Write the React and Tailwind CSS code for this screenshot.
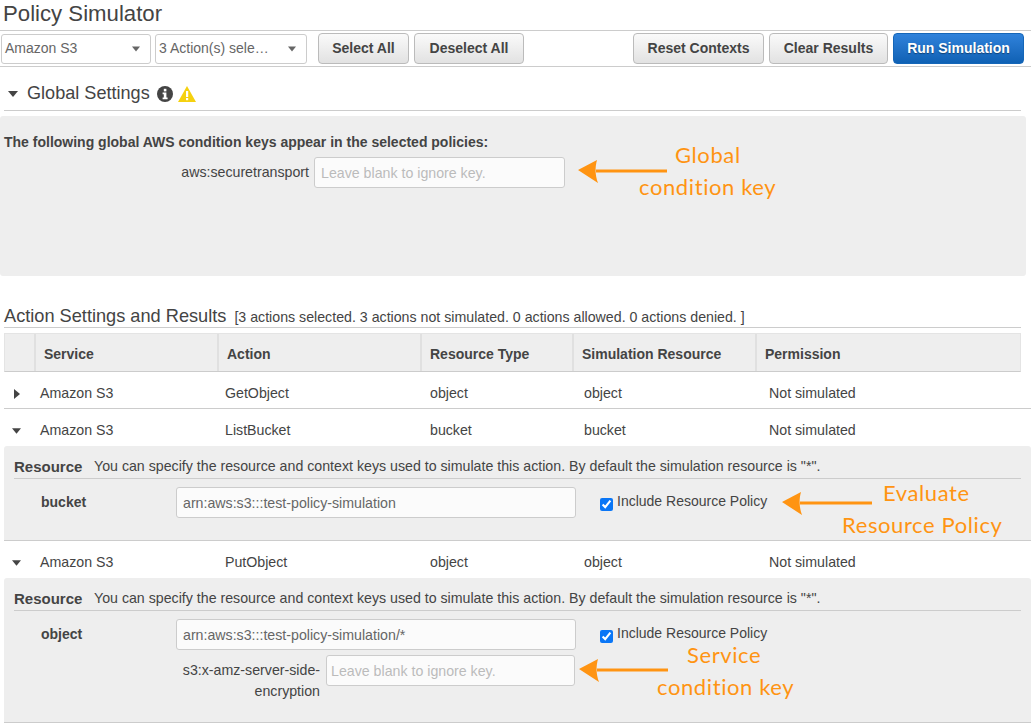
import React from "react";

const Caret = ({ className = "" }) => (
  <svg width="10" height="6" viewBox="0 0 10 6" className={className}>
    <path d="M0 0h10L5 6z" fill="currentColor" />
  </svg>
);

function Select({ label, width }) {
  return (
    <div className={`${width} h-[30px] bg-white border border-[#ccc] rounded-[3px] flex items-center justify-between pl-[3px] pr-[10px] text-[14px] text-[#666]`}>
      <span>{label}</span>
      <Caret className="text-[#666] w-[8px]" />
    </div>
  );
}

function Btn({ children, width }) {
  return (
    <button className={`${width} h-[31px] rounded-[4px] border border-[#bbb] bg-linear-to-b from-[#fafafa] to-[#e2e2e2] text-[14px] font-bold text-[#444]`}>
      {children}
    </button>
  );
}

// hand drawn arrow pointing left, used by the annotations
function Arrow({ width = 90 }) {
  return (
    <svg width={width} height="26" viewBox={`0 0 ${width} 26`}>
      <path d={`M18 13H${width}`} stroke="#ff9412" strokeWidth="3" />
      <path d="M0 12L19 2C17 9 17 17 20 25z" fill="#ff9412" />
    </svg>
  );
}

function Note({ className, lines }) {
  return (
    <div className={`absolute whitespace-nowrap text-[#ff9412] text-[22px] leading-[32px] tracking-[0.6px] font-['Lato','DejaVu_Sans',sans-serif] ${className}`}>
      {lines.map((l) => (
        <div key={l.text} className={l.cls}>{l.text}</div>
      ))}
    </div>
  );
}

function ActionRow({ action, type, open, border }) {
  return (
    <div className={`grid grid-cols-[36px_185px_205px_154px_185px_1fr] items-center ml-[4px] h-[37px] text-[14.2px] text-[#444] ${border ? "pt-[7px] border-b border-[#ccc]" : "pt-[6px]"}`}>
      <span className="flex justify-center pr-[11px]">
        {open ? (
          <Caret className="text-[#444] w-[9px]" />
        ) : (
          <svg width="6" height="10" viewBox="0 0 6 10"><path d="M0 0l6 5-6 5z" fill="#444" /></svg>
        )}
      </span>
      <span>Amazon S3</span>
      <span>{action}</span>
      <span>{type}</span>
      <span>{type}</span>
      <span>Not simulated</span>
    </div>
  );
}

function Field({ value, placeholder, width, pad = "px-[6px]" }) {
  return (
    <input
      readOnly
      value={value || ""}
      placeholder={placeholder}
      className={`${width} ${pad} h-[31px] rounded-[3px] border border-[#ccc] bg-[#fbfbfb] text-[14.2px] text-[#666] placeholder:text-[#bbb] outline-none`}
    />
  );
}

function ResourceHead() {
  return (
    <div className="ml-[10px] mr-[10px] h-[33px] pt-[10px] border-b border-[#ccc] flex items-center text-[#444]">
      <b className="text-[15px] w-[80px]">Resource</b>
      <span className="text-[14.2px] whitespace-nowrap">You can specify the resource and context keys used to simulate this action. By default the simulation resource is "*".</span>
    </div>
  );
}

function IncludePolicy() {
  return (
    <label className="flex items-start gap-[4px] ml-[24px] -mt-[2px] text-[14px] text-[#444]">
      <input type="checkbox" readOnly checked className="w-[13px] h-[13px] mt-[7px] accent-[#0a76f6]" />
      <span>Include Resource Policy</span>
    </label>
  );
}

export default function App() {
  const headers = ["Service", "Action", "Resource Type", "Simulation Resource", "Permission"];
  return (
    <div className="relative w-[1031px] h-[726px] overflow-hidden bg-white text-[#444] font-['Liberation_Sans',Arial,sans-serif]">
      <h1 className="h-[31px] pl-[3px] text-[22.2px] leading-[27px] border-b border-[#ccc]">Policy Simulator</h1>

      <div className="h-[36px] border-b border-[#ccc] flex items-center pl-[1px] pr-[7px]">
        <Select label="Amazon S3" width="w-[150px]" />
        <div className="ml-[4px]"><Select label="3 Action(s) sele…" width="w-[152px]" /></div>
        <div className="ml-[11px] flex gap-[5px]">
          <Btn width="w-[91px]">Select All</Btn>
          <Btn width="w-[110px]">Deselect All</Btn>
        </div>
        <div className="ml-auto flex gap-[5px]">
          <Btn width="w-[131px]">Reset Contexts</Btn>
          <Btn width="w-[119px]">Clear Results</Btn>
          <button className="w-[131px] h-[31px] rounded-[4px] border border-[#1566b8] bg-linear-to-b from-[#2f82db] to-[#0f61b4] text-[14px] font-bold text-white [text-shadow:0_1px_1px_#0006]">
            Run Simulation
          </button>
        </div>
      </div>

      <div className="ml-[4px] mr-[10px] h-[44px] pt-[10px] border-b border-[#ccc] flex items-center pl-[4px]">
        <Caret className="text-[#444] w-[10px]" />
        <span className="ml-[9px] text-[18.1px]">Global Settings</span>
        <svg width="16" height="16" viewBox="0 0 16 16" className="ml-[7px]">
          <circle cx="8" cy="8" r="8" fill="#444" />
          <rect x="6.8" y="2.8" width="2.6" height="2.6" fill="#fff" />
          <path d="M5.6 6.6h3.8v5h1.2v1.6H5.6v-1.6h1.2V8.2H5.6z" fill="#fff" />
        </svg>
        <svg width="18" height="16" viewBox="0 0 18 16" className="ml-[5px]">
          <path d="M9 0l9 16H0z" fill="#f5d10f" />
          <rect x="8" y="5" width="2.2" height="6" fill="#fff" />
          <rect x="8" y="12" width="2.2" height="2.2" fill="#fff" />
        </svg>
      </div>

      <section className="relative mt-[5px] mr-[5px] h-[160px] bg-[#eee] rounded-[3px]">
        <p className="pl-[4px] pt-[18px] text-[14px] leading-[17px] font-bold">The following global AWS condition keys appear in the selected policies:</p>
        <div className="mt-[6px] flex items-center">
          <span className="w-[309px] text-right text-[14.2px]">aws:securetransport</span>
          <div className="ml-[5px]"><Field placeholder="Leave blank to ignore key." width="w-[251px]" /></div>
        </div>
      </section>

      <div className="ml-[4px] mr-[10px] mt-[27px] h-[25px] pt-[1px] border-b border-[#ccc] flex items-baseline">
        <span className="text-[18.2px] leading-[24px]">Action Settings and Results</span>
        <span className="ml-[8px] text-[14.2px]">[3 actions selected. 3 actions not simulated. 0 actions allowed. 0 actions denied. ]</span>
      </div>

      <div className="ml-[4px] mr-[10px] mt-[5px] h-[39px] bg-[#eee] border border-[#e4e4e4] border-b-[#ccc] grid grid-cols-[29px_183px_203px_152px_183px_1fr] text-[14px] font-bold">
        <span />
        {headers.map((h) => (
          <span key={h} className="border-l-2 border-[#e0e0e0] pl-[8px] pt-[3px] flex items-center">{h}</span>
        ))}
      </div>

      <ActionRow action="GetObject" type="object" border />
      <ActionRow action="ListBucket" type="bucket" open />

      <section className="ml-[4px] h-[95px] bg-[#eee] rounded-t-[3px] border-b border-[#ccc]">
        <ResourceHead />
        <div className="mt-[8px] flex items-center">
          <b className="w-[172px] pl-[37px] text-[14px]">bucket</b>
          <Field value="arn:aws:s3:::test-policy-simulation" width="w-[400px]" />
          <IncludePolicy />
        </div>
      </section>

      <ActionRow action="PutObject" type="object" open />

      <section className="ml-[4px] h-[145px] bg-[#eee] rounded-t-[3px] border-b border-[#ccc]">
        <ResourceHead />
        <div className="mt-[8px] flex items-center">
          <b className="w-[172px] pl-[37px] text-[14px]">object</b>
          <Field value="arn:aws:s3:::test-policy-simulation/*" width="w-[400px]" />
          <IncludePolicy />
        </div>
        <div className="mt-[5px] flex items-start">
          <span className="w-[316px] pl-[160px] text-right text-[14.2px] leading-[21px] pt-[5px]">s3:x-amz-server-side-encryption</span>
          <div className="ml-[6px]"><Field placeholder="Leave blank to ignore key." width="w-[249px]" pad="px-[4px]" /></div>
        </div>
      </section>

      <div className="absolute left-[578px] top-[158px]"><Arrow width={89} /></div>
      <Note className="left-[639px] top-[139px]" lines={[{ text: "Global", cls: "pl-[36px]" }, { text: "condition key" }]} />

      <div className="absolute left-[782px] top-[490px]"><Arrow width={90} /></div>
      <Note className="left-[842px] top-[477px]" lines={[{ text: "Evaluate", cls: "pl-[41px]" }, { text: "Resource Policy" }]} />

      <div className="absolute left-[579px] top-[657px]"><Arrow width={89} /></div>
      <Note className="left-[657px] top-[639px]" lines={[{ text: "Service", cls: "pl-[30px]" }, { text: "condition key" }]} />
    </div>
  );
}
